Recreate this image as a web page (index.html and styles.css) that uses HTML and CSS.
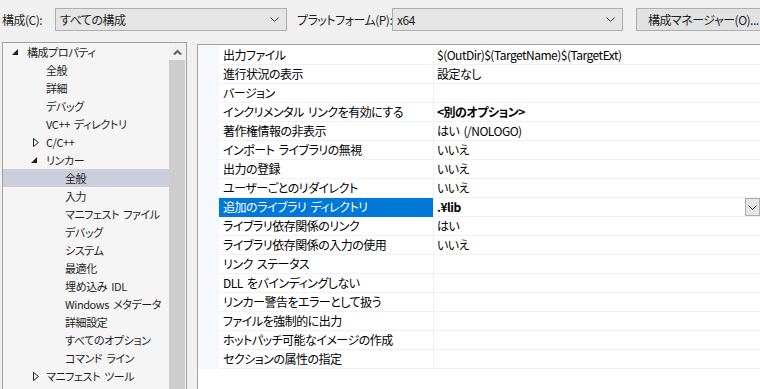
FILE: index.html
```html
<!DOCTYPE html>
<html>
  <head>
    <meta charset="utf-8">
    <link rel="stylesheet" href="styles.css">
  </head>
  <body>
    <div class="toolbar">
      <span class="label first">構成(C):</span>
      <div class="combo conf">
        <span>すべての構成</span>
        <svg class="chev" width="9" height="5" viewBox="0 0 9 5"><polyline points="0.5,0.5 4.5,4.5 8.5,0.5" fill="none" stroke="#333" stroke-width="1"/></svg>
      </div>
      <span class="label plat">プラットフォーム(P):</span>
      <div class="combo platform">
        <span>x64</span>
        <svg class="chev" width="9" height="5" viewBox="0 0 9 5"><polyline points="0.5,0.5 4.5,4.5 8.5,0.5" fill="none" stroke="#333" stroke-width="1"/></svg>
      </div>
      <button class="manager">構成マネージャー(O)...</button>
    </div>

    <div class="main">
      <div class="tree">
        <ul class="nodes">
          <li class="lv0"><span class="tog"><svg width="6" height="6" viewBox="0 0 6 6"><polygon points="6,0 6,6 0,6" fill="#1e1e1e"/></svg></span>構成プロパティ</li>
          <li class="lv1"><span class="tog"></span>全般</li>
          <li class="lv1"><span class="tog"></span>詳細</li>
          <li class="lv1"><span class="tog"></span>デバッグ</li>
          <li class="lv1"><span class="tog"></span>VC++ ディレクトリ</li>
          <li class="lv1 closed"><span class="tog"><svg width="6" height="9" viewBox="0 0 6 9"><polygon points="0.5,0.5 5.5,4.5 0.5,8.5" fill="none" stroke="#1e1e1e" stroke-width="1"/></svg></span>C/C++</li>
          <li class="lv1"><span class="tog"><svg width="6" height="6" viewBox="0 0 6 6"><polygon points="6,0 6,6 0,6" fill="#1e1e1e"/></svg></span>リンカー</li>
          <li class="lv2 current"><span class="tog"></span>全般</li>
          <li class="lv2"><span class="tog"></span>入力</li>
          <li class="lv2"><span class="tog"></span>マニフェスト ファイル</li>
          <li class="lv2"><span class="tog"></span>デバッグ</li>
          <li class="lv2"><span class="tog"></span>システム</li>
          <li class="lv2"><span class="tog"></span>最適化</li>
          <li class="lv2"><span class="tog"></span>埋め込み IDL</li>
          <li class="lv2"><span class="tog"></span>Windows メタデータ</li>
          <li class="lv2"><span class="tog"></span>詳細設定</li>
          <li class="lv2"><span class="tog"></span>すべてのオプション</li>
          <li class="lv2"><span class="tog"></span>コマンド ライン</li>
          <li class="lv1 closed"><span class="tog"><svg width="6" height="9" viewBox="0 0 6 9"><polygon points="0.5,0.5 5.5,4.5 0.5,8.5" fill="none" stroke="#1e1e1e" stroke-width="1"/></svg></span>マニフェスト ツール</li>
          <li class="lv1 closed"><span class="tog"></span>XML ドキュメント</li>
        </ul>
        <div class="scrollbar">
          <div class="arrow"><svg width="9" height="6" viewBox="0 0 9 6"><polygon points="0,5 4.5,0.5 9,5 7,6 4.5,3.5 2,6" fill="#606060"/></svg></div>
          <div class="thumb"></div>
        </div>
      </div>

      <div class="grid">
        <div class="props">
          <div class="row"><span class="gut"></span><span class="name">出力ファイル</span><span class="val">$(OutDir)$(TargetName)$(TargetExt)</span></div>
          <div class="row"><span class="gut"></span><span class="name">進行状況の表示</span><span class="val">設定なし</span></div>
          <div class="row"><span class="gut"></span><span class="name">バージョン</span><span class="val"></span></div>
          <div class="row"><span class="gut"></span><span class="name">インクリメンタル リンクを有効にする</span><span class="val bold">&lt;別のオプション&gt;</span></div>
          <div class="row"><span class="gut"></span><span class="name">著作権情報の非表示</span><span class="val">はい (/NOLOGO)</span></div>
          <div class="row"><span class="gut"></span><span class="name">インポート ライブラリの無視</span><span class="val">いいえ</span></div>
          <div class="row"><span class="gut"></span><span class="name">出力の登録</span><span class="val">いいえ</span></div>
          <div class="row"><span class="gut"></span><span class="name">ユーザーごとのリダイレクト</span><span class="val">いいえ</span></div>
          <div class="row selected"><span class="gut"></span><span class="name">追加のライブラリ ディレクトリ</span><span class="val bold">.¥lib<span class="drop"><svg width="9" height="5" viewBox="0 0 9 5"><polyline points="0.5,0.5 4.5,4.5 8.5,0.5" fill="none" stroke="#333" stroke-width="1"/></svg></span></span></div>
          <div class="row"><span class="gut"></span><span class="name">ライブラリ依存関係のリンク</span><span class="val">はい</span></div>
          <div class="row"><span class="gut"></span><span class="name">ライブラリ依存関係の入力の使用</span><span class="val">いいえ</span></div>
          <div class="row"><span class="gut"></span><span class="name">リンク ステータス</span><span class="val"></span></div>
          <div class="row"><span class="gut"></span><span class="name">DLL をバインディングしない</span><span class="val"></span></div>
          <div class="row"><span class="gut"></span><span class="name">リンカー警告をエラーとして扱う</span><span class="val"></span></div>
          <div class="row"><span class="gut"></span><span class="name">ファイルを強制的に出力</span><span class="val"></span></div>
          <div class="row"><span class="gut"></span><span class="name">ホットパッチ可能なイメージの作成</span><span class="val"></span></div>
          <div class="row"><span class="gut"></span><span class="name">セクションの属性の指定</span><span class="val"></span></div>
        </div>
      </div>
    </div>
  </body>
</html>
```

FILE: styles.css
```css
html, body {
  height: 100%;
}
body {
  margin: 0;
  background: #f0f0f0;
  font-family: "Noto Sans CJK JP", sans-serif;
  font-size: 12px;
  font-feature-settings: "palt";
  letter-spacing: -0.5px;
  word-spacing: 2px;
  color: #1e1e1e;
  overflow: hidden;
  display: flex;
  flex-direction: column;
}

/* top bar */
.toolbar {
  display: flex;
  align-items: center;
  height: 42px;
  padding: 0 0 4px 2px;
  box-sizing: border-box;
  white-space: nowrap;
}
.toolbar > * {
  flex-shrink: 0;
}
.label.first {
  width: 53px;
}
.label.plat {
  margin-left: 10px;
  width: 95px;
}
.combo {
  display: flex;
  align-items: center;
  height: 23px;
  box-sizing: border-box;
  border: 1px solid #adadad;
  background: #e5e5e5;
  padding: 0 7px 0 4px;
}
.combo.conf {
  width: 232px;
}
.combo.platform {
  width: 231px;
}
.chev {
  margin-left: auto;
}
.manager {
  margin-left: 13px;
  height: 23px;
  width: 135px;
  border: 1px solid #adadad;
  background: #e1e1e1;
  font: inherit;
  letter-spacing: inherit;
  color: #1e1e1e;
  text-align: left;
  padding: 0 0 0 11px;
}

.main {
  flex: 1;
  display: flex;
  min-height: 0;
}

/* tree on the left */
.tree {
  margin-left: 2px;
  width: 185px;
  flex-shrink: 0;
  box-sizing: border-box;
  border: 1px solid #a0a0a0;
  border-bottom: none;
  background: #f5f5f5;
  display: flex;
  font-size: 11px;
  letter-spacing: -0.4px;
}
.nodes {
  list-style: none;
  margin: 0;
  padding: 0;
  flex: 1;
  overflow: hidden;
}
.nodes li {
  height: 18px;
  line-height: 18px;
  display: flex;
  align-items: center;
  white-space: nowrap;
}
.nodes .lv0 { padding-left: 8px; }
.nodes .lv1 { padding-left: 27px; }
.nodes .lv2 { padding-left: 46px; }
.nodes .current {
  background: #cccedb;
}
.tog {
  width: 16px;
  flex-shrink: 0;
  display: flex;
  align-items: center;
  padding-left: 1px;
  box-sizing: border-box;
}
.closed .tog {
  padding-left: 3px;
}
.scrollbar {
  width: 17px;
  background: #f0f0f0;
}
.arrow {
  height: 17px;
  display: flex;
  align-items: center;
  justify-content: center;
  padding-right: 1px;
}
.thumb {
  width: 16px;
  height: 400px;
  background: #cdcdcd;
}

/* property grid */
.grid {
  flex: 1;
  margin: 2px -1px 0 10px;
  border: 1px solid #a0a0a0;
  border-bottom: none;
  background: #fff;
  padding-top: 1px;
}
.row {
  display: grid;
  grid-template-columns: 21px 214px 1fr;
  height: 19px;
}
.row span {
  display: block;
  white-space: nowrap;
  overflow: hidden;
}
.gut {
  background: #f5f8fd;
}
.name, .val {
  border-bottom: 1px solid #eef1f7;
  line-height: 18px;
  padding-left: 4px;
  color: #000;
}
.val {
  border-left: 1px solid #eef1f7;
  padding-left: 3px;
  position: relative;
}
.bold {
  font-weight: bold;
}
.selected .name {
  background: #0078d7;
  color: #fff;
  border-bottom-color: #0078d7;
}
.drop {
  position: absolute;
  right: 0;
  top: 0;
  width: 15px;
  height: 18px;
  box-sizing: border-box;
  border: 1px solid #adadad;
  background: #e5e5e5;
  display: flex !important;
  align-items: center;
  justify-content: center;
}
```
